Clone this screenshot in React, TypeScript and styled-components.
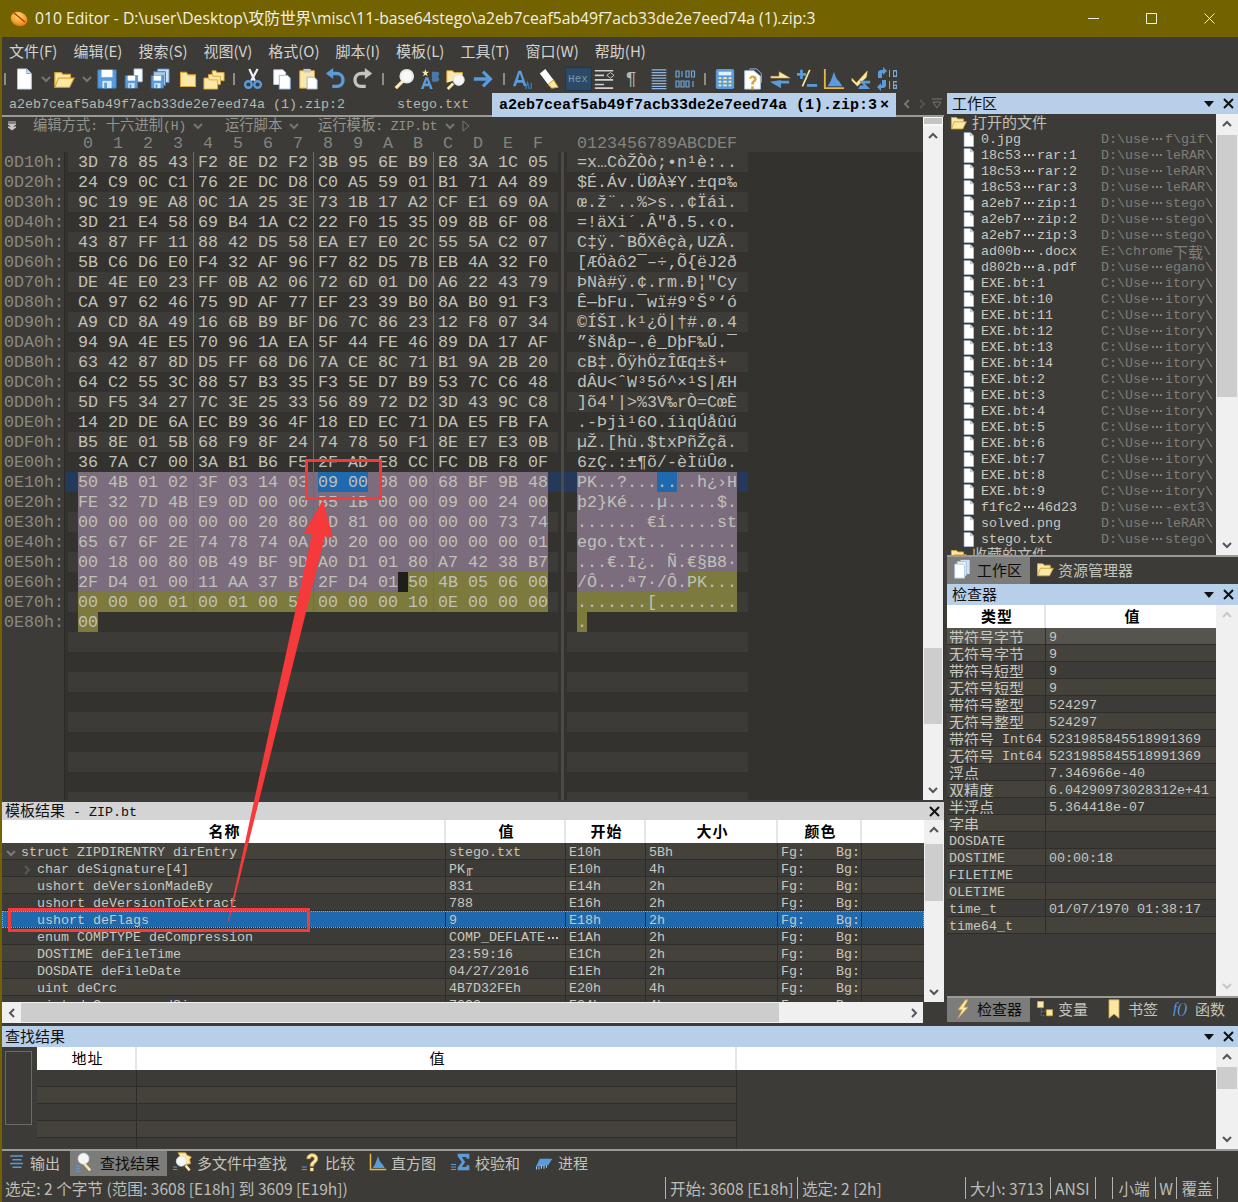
import React from 'react';
import styled, { createGlobalStyle } from 'styled-components';

const MONO = '"Liberation Mono", "DejaVu Sans Mono", monospace';
const CJK = '"Noto Sans CJK SC", "Noto Sans", sans-serif';
const BG = '#3c3b37';
const DARK = '#33322e';
const BLUEBAR = '#b8cfe9';
const OLIVE = '#736200';
const LINE = '#2e2d29';
const SCROLL = '#f0f0f0';
const THUMB = '#cdcdcd';

const Global = createGlobalStyle`
  html, body { margin: 0; padding: 0; background: ${BG}; overflow: hidden; }
  * { box-sizing: border-box; }
`;

const Cjk = styled.span`
  font-family: ${CJK}; font-size: 15px; line-height: 1;
`;
const Window = styled.div`
  position: relative; width: 1238px; height: 1202px; background: ${BG};
  border-left: 2px solid ${OLIVE}; display: flex; flex-direction: column; overflow: hidden;
  font-family: ${MONO}; font-size: 13.34px; color: #c8c8c0;
`;
const TitleBar = styled.div`
  height: 37px; margin-left: -2px; background: ${OLIVE}; display: flex; align-items: center; padding-left: 10px; flex: none;
`;
const TitleText = styled.span`
  font-family: "Open Sans", ${CJK}; font-size: 15.7px; color: #f2f0e4; margin: -3px 0 0 7px; white-space: nowrap; flex: 1;
`;
const WinBtn = styled.div`
  width: 58px; height: 37px; display: flex; align-items: center; justify-content: center; flex: none;
`;
const MenuBar = styled.div`
  height: 28px; display: flex; align-items: center; gap: 16px; padding: 0 0 2px 7px; flex: none;
  font-family: ${CJK}; font-size: 15px; color: #d2d2d0;
`;
const ToolBar = styled.div`
  height: 28px; display: flex; align-items: center; flex: none;
`;
const ToolItem = styled.div<{ $ml: number }>`
  width: 16px; margin-left: ${p => p.$ml}px; height: 28px; flex: none; display: flex; align-items: center; justify-content: center;
  & > * { flex: none; }
`;
const ToolSep = styled.div`
  width: 2px; height: 12px; background: #8d8d88;
`;
const HexBox = styled.div`
  width: 27px; height: 24px; background: #2b4a68; border: 1px solid #20384f; color: #7f95a8; font-size: 11px;
  display: flex; align-items: center; justify-content: center;
`;
const Pilcrow = styled.span`
  font-family: "Liberation Sans", sans-serif; font-size: 19px; color: #b8b8b4;
`;
const Workspace = styled.div`
  height: 933px; display: flex; flex: none;
`;
const EditorCol = styled.div`
  width: 942px; display: flex; flex-direction: column; flex: none;
`;
const SideCol = styled.div`
  width: 291px; margin-left: 3px; display: flex; flex-direction: column; flex: none;
`;
const DocTabs = styled.div`
  height: 24px; border-bottom: 2px solid #9a9a96; display: flex; flex: none; position: relative;
`;
const DocTab = styled.div<{ $w: number; $on?: boolean }>`
  width: ${p => p.$w}px; height: ${p => (p.$on ? 24 : 22)}px; flex: none; display: flex; align-items: center; justify-content: space-between;
  padding: 0 7px; font-weight: ${p => (p.$on ? 700 : 400)}; font-size: ${p => (p.$on ? 15 : 13.34)}px; white-space: pre;
  background: ${p => (p.$on ? BLUEBAR : 'transparent')}; color: ${p => (p.$on ? '#000' : '#b8b8b0')};
`;
const TabNav = styled.div`
  flex: 1; height: 22px; display: flex; align-items: center; justify-content: space-around; padding: 0 0 0 4px;
`;
const HexPane = styled.div`
  height: 683px; display: flex; flex: none; background: ${DARK};
`;
const HexMain = styled.div`
  width: 921px; flex: none; display: flex; flex-direction: column; overflow: hidden;
`;
const HexToolbar = styled.div`
  height: 17px; flex: none; background: ${BG}; color: #94948e; display: flex; align-items: center; white-space: pre; font-size: 13px; line-height: 15px;
  ${Cjk} { font-size: 14.3px; }
`;
const HexOption = styled.span<{ $w: number; $pl?: number }>`
  width: ${p => p.$w}px; flex: none; display: flex; align-items: center; gap: 6px; white-space: pre; padding-left: ${p => p.$pl ?? 0}px;
`;
const Ruler = styled.div`
  height: 18px; flex: none; background: ${BG}; display: flex; padding-left: 71px; color: #84847e; font-size: 16.67px; align-items: center; white-space: pre;
`;
const RulerCell = styled.span`
  width: 30px; flex: none; text-align: center;
`;
const RulerAscii = styled.span`
  margin-left: 24px;
`;
const HexRows = styled.div`
  flex: 1; overflow: hidden; font-size: 16.67px;
`;
const HexRowBox = styled.div`
  height: 20px; display: flex; align-items: stretch; white-space: pre; line-height: 22px;
`;
const Addr = styled.div`
  width: 62px; flex: none; background: ${BG}; padding-left: 2px; color: #8a8a84;
`;
const Gutter = styled.div<{ $hl: boolean }>`
  width: 4px; flex: none; border-left: 1px solid #2c2b28; background: ${p => (p.$hl ? '#253a5a' : DARK)};
`;
const HexArea = styled.div<{ $even: boolean; $hl: boolean }>`
  width: 490px; flex: none; padding-left: 10px; display: flex;
  background: ${p => (p.$hl ? '#253a5a' : p.$even ? BG : DARK)};
`;
const Cell = styled.span<{ $t: string; $g: string; $s: boolean }>`
  width: 30px; flex: none; height: 20px; color: #c0c0b9;
  background: linear-gradient(to right, ${p => p.$t} 0 20px, ${p => p.$g} 20px 25px, ${p => (p.$s ? '#6d6c68' : p.$g)} 25px 26px, ${p => p.$g} 26px 30px);
`;
const ColGap = styled.div<{ $hl: boolean }>`
  width: 3px; flex: none; background: ${p => (p.$hl ? '#253a5a' : DARK)};
`;
const ColSep = styled.div`
  width: 3px; flex: none; background: #4b4a46;
`;
const AsciiArea = styled(HexArea)`
  width: 181px;
`;
const AsciiChar = styled.span<{ $t: string }>`
  width: 10px; flex: none; height: 20px; background: ${p => p.$t}; color: #c0c0b9; text-align: center; overflow: hidden;
`;
const VScroll = styled.div<{ $w: number }>`
  width: ${p => p.$w}px; flex: none; background: ${SCROLL}; display: flex; flex-direction: column;
`;
const ScrollArrow = styled.div<{ $h?: number }>`
  height: ${p => p.$h ?? 20}px; flex: none; display: flex; align-items: center; justify-content: center;
`;
const ScrollTrack = styled.div`
  flex: 1; padding: 0 1px; min-height: 0;
`;
const ScrollThumb = styled.div<{ $top: number; $h: number }>`
  margin-top: ${p => p.$top}px; height: ${p => p.$h}px; background: ${THUMB};
`;
const GripTop = styled.div`
  height: 9px; flex: none; background: #f8f8f8; padding: 1px 1px 2px;
  &::before { content: ''; display: block; height: 100%; background: #c4c4c4; }
`;
const PanelTitle = styled.div<{ $grey?: boolean; $pl?: number }>`
  height: ${p => (p.$grey ? 18 : 21)}px; flex: none; display: flex; align-items: center; justify-content: space-between; padding: 0 4px 0 ${p => p.$pl ?? 5}px;
  color: #111; background: ${p => (p.$grey ? '#d4d4d4' : BLUEBAR)};
`;
const TitleBtns = styled.div`
  display: flex; align-items: center; gap: 9px;
`;
const PanelGap = styled.div`
  height: 2px; flex: none;
`;
const TemplatePanel = styled.div`
  flex: 1; display: flex; flex-direction: column; min-height: 0;
`;
const TableWrap = styled.div`
  height: 182px; display: flex; flex: none;
`;
const TableMain = styled.div`
  flex: 1; min-width: 0; display: flex; flex-direction: column; overflow: hidden;
`;
const HeadRow = styled.div<{ $h: number }>`
  height: ${p => p.$h}px; flex: none; display: flex; background: #fff;
`;
const HeadCell = styled.div<{ $w: number; $bold?: boolean; $flex?: boolean }>`
  width: ${p => p.$w}px; flex: ${p => (p.$flex ? 1 : 'none')}; display: flex; align-items: center; justify-content: center;
  padding: 0 0 2px 3px;
  border-right: ${p => (p.$flex ? 'none' : '2px solid #e6e6e6')}; color: #000;
  font-family: ${CJK}; font-size: 15px; letter-spacing: 1px; font-weight: ${p => (p.$bold ? 700 : 400)};
`;
const BodyRow = styled.div<{ $tone: string }>`
  height: 17px; flex: none; display: flex; background: ${p => p.$tone}; border-bottom: 1px solid ${LINE}; white-space: pre;
  line-height: 16px;
`;
const BodyCell = styled.div<{ $w: number; $pl?: number; $flex?: boolean; $end?: boolean }>`
  width: ${p => p.$w}px; flex: ${p => (p.$flex ? 1 : 'none')}; padding: 4px 0 0 ${p => p.$pl ?? 3}px; overflow: hidden;
  border-right: ${p => (p.$end ? 'none' : `1px solid ${LINE}`)}; color: #c8c8c0; display: flex; align-items: center;
  ${Cjk} { margin-top: -3px; }
`;
const FocusLine = styled(BodyRow)`
  outline: 1px dotted #c99a5a; outline-offset: -1px;
`;
const Twisty = styled.span`
  flex: none; width: 16px; display: inline-flex; align-items: center; justify-content: flex-start;
`;
const FgBg = styled.span`
  width: 55px; flex: none;
`;
const HScroll = styled.div`
  width: 921px; height: 21px; flex: none; display: flex; background: ${SCROLL}; align-items: center;
`;
const HScrollEnd = styled.div`
  width: 19px; height: 20px; flex: none; display: flex; align-items: center; justify-content: center;
`;
const HThumb = styled.div`
  width: 758px; height: 19px; background: ${THUMB}; flex: none;
`;
const HFill = styled.div`
  flex: 1;
`;
const FileList = styled.div`
  height: 441px; flex: none; display: flex;
`;
const FileMain = styled.div`
  flex: 1; overflow: hidden; min-width: 0;
`;
const FileGroup = styled.div<{ $h: number }>`
  height: ${p => p.$h}px; display: flex; align-items: center; padding-left: 3px; gap: 5px; color: #c0c0b8;
`;
const FileRow = styled.div`
  height: 16px; display: flex; align-items: center; padding-left: 14px; white-space: pre; color: #c8c8c0;
`;
const FileIcon = styled.span`
  width: 20px; flex: none; display: flex; align-items: center;
`;
const FileName = styled.span`
  width: 120px; flex: none; display: flex; align-items: center;
`;
const FilePath = styled.span`
  color: #7e7e78; display: flex; align-items: center;
`;
const Ell = styled.span`
  width: 16px; flex: none; display: inline-flex; justify-content: center; gap: 2px; align-items: center;
  &::before, &::after { content: ''; width: 2px; height: 2px; background: currentColor; }
  & > i { width: 2px; height: 2px; background: currentColor; display: block; }
`;
const TabBar = styled.div<{ $h: number; $line?: boolean }>`
  height: ${p => p.$h}px; flex: none; display: flex; align-items: stretch;
  border-top: ${p => (p.$line ? '2px solid #9a9a96' : 'none')};
`;
const TabItem = styled.div<{ $w: number; $on?: boolean }>`
  width: ${p => p.$w}px; flex: none; display: flex; align-items: center; gap: 4px; padding: 0 0 3px 6px;
  background: ${p => (p.$on ? '#7c7c7a' : 'transparent')}; color: ${p => (p.$on ? '#0c0c0c' : '#c4c4be')};
  & > svg { flex: none; }
`;
const InspectorWrap = styled.div`
  height: 391px; flex: none; display: flex;
`;
const FindPanel = styled.div`
  height: 123px; flex: none; display: flex; flex-direction: column;
`;
const FindBody = styled.div`
  flex: 1; display: flex; min-height: 0;
`;
const FindGutter = styled.div`
  width: 35px; flex: none; padding: 4px 3px 0 3px;
`;
const FindBox = styled.div`
  width: 27px; height: 74px; border: 1px solid #6b6b67;
`;
const FindRow = styled.div`
  height: 17px; flex: none; display: flex;
`;
const FindCell = styled.div<{ $w: number; $alt: boolean }>`
  width: ${p => p.$w}px; flex: none; background: ${p => (p.$alt ? '#45423c' : BG)};
  border-right: 1px solid ${LINE}; border-bottom: 1px solid ${LINE};
`;
const StatusBar = styled.div`
  height: 26px; flex: none; display: flex; align-items: center; padding-bottom: 2px; font-family: ${CJK}; font-size: 15.6px; color: #bdbdb8; white-space: pre;
`;
const StatusMain = styled.div`
  width: 663px; flex: none; padding-left: 3px;
`;
const StatusCell = styled.div<{ $w: number; $c?: boolean }>`
  width: ${p => p.$w}px; height: 22px; flex: none; border-left: 1px solid #b5b5b0; padding-left: ${p => (p.$c ? 0 : 4)}px;
  display: flex; align-items: center; justify-content: ${p => (p.$c ? 'center' : 'flex-start')};
`;
const FnGlyph = styled.span`
  font-family: "Liberation Serif", serif; font-style: italic; font-size: 15px; color: #5a9bdc; width: 18px; white-space: pre; flex: none;
`;
const Annotation = styled.svg`
  position: absolute; left: -2px; top: 0; pointer-events: none;
`;

/* ---------- icons ---------- */
const I: React.FC<{ s?: number; children: React.ReactNode }> = ({ s = 22, children }) => (
  <svg width={s} height={s} viewBox="0 0 24 24">{children}</svg>
);
const W = '#ffffff';
const B = '#5a9bdc';
const Bd = '#3a78bc';
const Y = '#fbe8a6';
const Yd = '#d9a63e';

const Chev: React.FC<{ d: 'u' | 'd' | 'l' | 'r'; c?: string; s?: number }> = ({ d, c = '#555', s = 12 }) => {
  const p = { u: 'M2 8l4-4 4 4', d: 'M2 4l4 4 4-4', l: 'M8 2L4 6l4 4', r: 'M4 2l4 4-4 4' }[d];
  return <svg width={s} height={s} viewBox="0 0 12 12"><path d={p} fill="none" stroke={c} strokeWidth="2" /></svg>;
};
const Doc = ({ s = 22 }: { s?: number }) => (
  <I s={s}><path d="M5 1h10l5 5v17H5z" fill={W} stroke="#b9cfe8" /><path d="M15 1v5h5" fill="#cfe0f2" stroke="#7da6d4" /></I>
);
const FolderOpen = ({ s = 22 }: { s?: number }) => (
  <I s={s}><path d="M2 20V5h7l2 2h8v4" fill={Y} stroke={Yd} strokeWidth="1.3" /><path d="M2 21l4-10h17l-5 10z" fill={Y} stroke={Yd} strokeWidth="1.3" /></I>
);
const Floppy = ({ x = 0, y = 0, k = 1 }) => (
  <g transform={`translate(${x} ${y}) scale(${k})`}>
    <path d="M2 2h20v20H2z" fill={B} stroke={Bd} />
    <path d="M6 2h12v8H6z" fill={W} /><path d="M7 14h10v8H7z" fill="#d8e8f8" />
    <path d="M9 16h3v6H9z" fill={B} />
  </g>
);
const Save = () => <I><Floppy /></I>;
const SaveAs = () => <I><path d="M12 1h9v14h-9z" fill={W} stroke="#9fbfe0" /><Floppy x={1} y={7} k={0.68} /></I>;
const SaveAll = () => <I><path d="M9 1h13v15H9z" fill="#cfe0f2" stroke={Bd} /><path d="M5 4h13v15H5z" fill="#a8c8ea" stroke={Bd} /><Floppy x={1} y={7} k={0.68} /></I>;
const Folder = () => <I s={20}><path d="M3 21V4h7l2 3h9v14z" fill={Y} stroke={Yd} strokeWidth="1.3" /></I>;
const Folders = () => <I><path d="M10 13V3h4l1 2h8v9z" fill={Y} stroke={Yd} /><path d="M6 17V7h4l1 2h8v9z" fill={Y} stroke={Yd} /><path d="M1 23V11h5l1 2h9v10z" fill={Y} stroke={Yd} /></I>;
const Cut = () => <I><path d="M8 1l6 13M17 1l-7 13" stroke="#eef2f8" strokeWidth="2.4" fill="none" /><circle cx="7" cy="18" r="3.6" fill="none" stroke={B} strokeWidth="2.6" /><circle cx="17" cy="18" r="3.6" fill="none" stroke={B} strokeWidth="2.6" /></I>;
const Copy = () => <I><path d="M3 2h10l3 3v13H3z" fill={W} stroke="#b9cfe8" /><path d="M9 8h9l3 3v12H9z" fill={W} stroke="#8fb2d8" /></I>;
const Paste = () => <I><path d="M3 3h16v19H3z" fill={Y} stroke={Yd} /><path d="M7 1h8v4H7z" fill="#c8c8c8" /><path d="M11 10h8l3 3v10H11z" fill={W} stroke="#8fb2d8" /></I>;
const Undo = ({ c = B, flip = false }: { c?: string; flip?: boolean }) => (
  <I><g transform={flip ? 'translate(24 0) scale(-1 1)' : undefined}><path d="M6 6h8c9 0 9 14 0 14H9" fill="none" stroke={c} strokeWidth="3.6" /><path d="M10 0v12L2 6z" fill={c} /></g></I>
);
const Find = () => <I><path d="M3 22l8-8" stroke={Y} strokeWidth="3.6" /><circle cx="15" cy="9" r="7" fill="#f8f8f8" stroke="#e6e6e6" strokeWidth="2" /></I>;
const Replace = () => (
  <I><path d="M2 23L7 10h3l5 13h-3l-1-3H6l-1 3zm5-6h3L8.500 13z" fill={B} /><path d="M14 4h5c4 0 4 4 1 5 3 1 3 6-1 6h-5z" fill="#4f8fd0" opacity=".75" /><path d="M7 1l1 3h3L8.500 6l1 3L7 7.300 4.500 9l1-3L3 4h3z" fill={Y} /></I>
);
const FindFiles = () => <I><path d="M2 16V3h6l2 2h9v6" fill={Y} stroke={Yd} /><path d="M3 23l6-6" stroke={Y} strokeWidth="3" /><circle cx="15" cy="13" r="6" fill="#f4f4f4" stroke="#dcdcdc" /></I>;
const GoTo = () => <I><path d="M2 12h18M12 4l8 8-8 8" fill="none" stroke={B} strokeWidth="3.600" /></I>;
const Font = () => <I><path d="M1 20L7 3h3l6 17h-3l-1.500-4H5.500L4 20zm5.500-7h4.500L8.500 6z" fill={B} /><path d="M15 23l2-7 2 7M21 16v7" stroke={Bd} strokeWidth="1.500" fill="none" /></I>;
const Eraser = () => <I><path d="M2 6l6-5 9 12-6 5z" fill={W} /><path d="M11 18l6-5 5 8-7 1z" fill={Y} stroke={Yd} /></I>;
const ListIco = () => <I><path d="M2 3h20M2 8h10M2 13h20M2 18h10M2 22h20" stroke="#d0d0d0" strokeWidth="1.800" /><path d="M15 8l4-3 4 3-4 3z" fill="none" stroke="#d0d0d0" /></I>;
const Lines = () => <I><path d="M4 2h16M4 5h16M4 8h16M4 11h16M4 14h16M4 17h16M4 20h16M4 22.500h16" stroke="#8fb6e0" strokeWidth="1.300" /></I>;
const Calc = () => <I><path d="M4 1h16q2 0 2 2v18q0 2-2 2H4q-2 0-2-2V3q0-2 2-2z" fill={B} /><path d="M5 4h14v4H5z" fill="#dff0ff" /><path d="M5 10h3v2H5zM10 10h4v2h-4zM16 10h3v2h-3zM5 14h3v2H5zM10 14h4v2h-4zM16 14h3v2h-3zM5 18h3v2H5zM10 18h4v2h-4zM16 18h3v2h-3z" fill={Y} /></I>;
const HelpDoc = () => <I><path d="M3 3h10l7 6v14H3z" fill={W} stroke="#b9cfe8" /><path d="M8 1h8l5 5v10" fill="none" stroke="#9fbfe0" /><path d="M8 12c0-5 8-5 8 0 0 3-3 3-3 6h-3c0-4 3-4 3-6 0-2-3-2-3 0z" fill={Yd} /><path d="M10 20h3v3h-3z" fill={Yd} /></I>;
const Swap = () => <I><path d="M2 9h9V4l12 7H2z" fill={Y} stroke={Yd} strokeWidth=".6" /><path d="M22 14h-9v-1L1 15l12 7v-5h9z" fill={B} /></I>;
const PlusMinus = () => <I><path d="M1 7h10M6 2v10" stroke={B} strokeWidth="3" /><path d="M15 2L7 20" stroke={Y} strokeWidth="1.800" /><path d="M12 19h11" stroke={B} strokeWidth="3" /></I>;
const Hist = ({ s = 22 }: { s?: number }) => <I s={s}><path d="M2 1v21h21" fill="none" stroke="#e3b64a" strokeWidth="2" /><path d="M5 20l3-5 2-5 2-6 2 6 2 3 2 2 3 5z" fill={B} /></I>;
const Check = () => <I><path d="M2 11l5 5 12-13-1 7-10 10-6-6z" fill={Y} stroke={Yd} strokeWidth=".5" /><path d="M10 14h12v3h-6l6 6H9l2-4h4z" fill={B} /></I>;
const Convert = () => (
  <svg width="26" height="24" viewBox="0 0 26 24">
    <path d="M3 11V6q0-3 3-3h2V0l4 4-4 4V6H7v5z" fill={B} /><path d="M11 13v5q0 3-3 3H6v3l-4-4 4-4v2h1v-5z" fill={B} />
    <path d="M14 3h1v7h-1zM18 3h4v7h-4zM19 4.500v4h2v-4zM14 14h1v8h-1zM18 14h4v1.500h-3v2h3v4.500h-4zM19 19v1.500h2V19z" fill="#7aa8d8" />
  </svg>
);
const Bits = () => (
  <svg width="22" height="22" viewBox="0 0 22 22">
    <g fill="none" stroke="#6fa8e0" strokeWidth="1.200">
      <path d="M2 3h3v6H2zM8 3v6M12 3h3v6h-3zM17.500 3h3v6h-3zM2 13h3v6H2zM7 13h3v6H7zM12 13h3v6h-3zM19 13v6" />
    </g>
  </svg>
);
const OutputIco = () => <I s={18}><path d="M3 4h17M6 9h12M3 14h17M6 19h12" stroke={B} strokeWidth="1.800" /></I>;
const SearchIco = () => <I s={20}><path d="M8 12l9 10" stroke={Y} strokeWidth="3" /><circle cx="9" cy="8" r="6.500" fill="#f6f6f6" stroke="#ddd" /><path d="M0 17h5M0 20h5M0 23h5" stroke={B} strokeWidth="1.300" /></I>;
const MultiFindIco = () => <I s={20}><path d="M6 1h9l2 3 5 2-2 3 1 5-6 1z" fill={Y} stroke={Yd} /><circle cx="10" cy="11" r="6" fill="#f6f6f6" stroke="#ddd" /><path d="M15 16l5 6" stroke={Y} strokeWidth="3" /><path d="M0 18h5M0 21h5" stroke={B} strokeWidth="1.300" /></I>;
const QuestionIco = () => <I s={20}><path d="M7 8c0-8 13-8 13 0 0 5-5 5-5 9h-4c0-6 5-6 5-9 0-3-5-3-5 0z" fill={Y} stroke={Yd} /><path d="M11 19h4v4h-4z" fill={Y} /><path d="M1 18h6M1 21h6" stroke={B} strokeWidth="1.300" /></I>;
const SumIco = () => <I s={20}><path d="M8 2h14v6h-3l-1-2h-5l4 6-4 6h5l1-2h3v6H8v-3l5-7-5-7z" fill={B} /><path d="M0 15h6M0 18h6M0 21h6" stroke={B} strokeWidth="1.300" /></I>;
const ProcIco = () => <I s={20}><path d="M2 18l5-10h15l-5 8z" fill={B} /><path d="M3 21v-3M6 21v-3M9 20v-4M12 20v-4M15 19v-3" stroke="#9fc4ea" strokeWidth="1.300" /></I>;
const DocsIco = () => <I s={20}><path d="M9 1h11v17H9z" fill="#cfe0f2" /><path d="M5 3h11v17H5z" fill="#e8f0f8" stroke="#9fbfe0" /><path d="M2 6h10l2 2v15H2z" fill={W} stroke="#9fbfe0" /></I>;
const BoltIco = () => <I s={20}><path d="M15 1L6 13h5l-5 10 12-13h-5l5-9z" fill={Y} stroke={Yd} /></I>;
const VarIco = () => <I s={18}><path d="M2 2h8v8H2zM14 13h8v8h-8z" fill={Y} stroke="#d9a63e" /><path d="M7 11v10h6M7 15h6" stroke={B} strokeDasharray="2 2" fill="none" /></I>;
const MarkIco = () => <I s={20}><path d="M6 1h12v22l-6-5-6 5z" fill={Y} stroke={Yd} /></I>;
const Logo = () => (
  <svg width="18" height="18" viewBox="0 0 18 18">
    <defs><radialGradient id="lg" cx=".4" cy=".35" r=".8"><stop offset="0" stopColor="#ffe07a" /><stop offset=".6" stopColor="#f39a1e" /><stop offset="1" stopColor="#c9581a" /></radialGradient></defs>
    <ellipse cx="9" cy="9" rx="8.500" ry="7" fill="url(#lg)" transform="rotate(25 9 9)" />
    <path d="M4 3l11 9" stroke="#b83a1a" strokeWidth="1.600" />
  </svg>
);
const Tri = () => <svg width="10" height="6" viewBox="0 0 10 6"><path d="M0 0h10L5 6z" fill="#111" /></svg>;
const CloseX = () => <svg width="11" height="11" viewBox="0 0 11 11"><path d="M1 1l9 9M10 1l-9 9" stroke="#111" strokeWidth="2" /></svg>;

/* ---------- text helper ---------- */
const mix = (t: string): React.ReactNode[] =>
  t.split(/([\u2E80-\u9FFF]+|⋯)/).filter(Boolean).map((part, i) =>
    part === '⋯' ? <Ell key={i}><i /></Ell> : /[\u2E80-\u9FFF]/.test(part) ? <Cjk key={i}>{part}</Cjk> : <span key={i}>{part}</span>
  );

/* ---------- data ---------- */
const HEX = [
  '3D 78 85 43 F2 8E D2 F2 3B 95 6E B9 E8 3A 1C 05', '24 C9 0C C1 76 2E DC D8 C0 A5 59 01 B1 71 A4 89',
  '9C 19 9E A8 0C 1A 25 3E 73 1B 17 A2 CF E1 69 0A', '3D 21 E4 58 69 B4 1A C2 22 F0 15 35 09 8B 6F 08',
  '43 87 FF 11 88 42 D5 58 EA E7 E0 2C 55 5A C2 07', '5B C6 D6 E0 F4 32 AF 96 F7 82 D5 7B EB 4A 32 F0',
  'DE 4E E0 23 FF 0B A2 06 72 6D 01 D0 A6 22 43 79', 'CA 97 62 46 75 9D AF 77 EF 23 39 B0 8A B0 91 F3',
  'A9 CD 8A 49 16 6B B9 BF D6 7C 86 23 12 F8 07 34', '94 9A 4E E5 70 96 1A EA 5F 44 FE 46 89 DA 17 AF',
  '63 42 87 8D D5 FF 68 D6 7A CE 8C 71 B1 9A 2B 20', '64 C2 55 3C 88 57 B3 35 F3 5E D7 B9 53 7C C6 48',
  '5D F5 34 27 7C 3E 25 33 56 89 72 D2 3D 43 9C C8', '14 2D DE 6A EC B9 36 4F 18 ED EC 71 DA E5 FB FA',
  'B5 8E 01 5B 68 F9 8F 24 74 78 50 F1 8E E7 E3 0B', '36 7A C7 00 3A B1 B6 F5 2F AD E8 CC FC DB F8 0F',
  '50 4B 01 02 3F 03 14 03 09 00 08 00 68 BF 9B 48', 'FE 32 7D 4B E9 0D 00 00 B5 1B 00 00 09 00 24 00',
  '00 00 00 00 00 00 20 80 ED 81 00 00 00 00 73 74', '65 67 6F 2E 74 78 74 0A 00 20 00 00 00 00 00 01',
  '00 18 00 80 0B 49 BF 9D A0 D1 01 80 A7 42 38 B7', '2F D4 01 00 11 AA 37 B7 2F D4 01 50 4B 05 06 00',
  '00 00 00 01 00 01 00 5B 00 00 00 10 0E 00 00 00', '00',
];
const PURPLE = '#7b6d7d';
const YELLOW = '#7c7a3c';
const BLUE = '#1f69ae';
const NONE = 'transparent';
const tone = (r: number, c: number): string => {
  if (r === 16 && (c === 8 || c === 9)) return BLUE;
  if (r >= 16 && r <= 20) return PURPLE;
  if (r === 21) return c <= 10 ? PURPLE : YELLOW;
  if (r === 22) return YELLOW;
  if (r === 23 && c === 0) return YELLOW;
  return NONE;
};
const gapTone = (r: number, c: number): string => {
  if (c === 15) return NONE;
  if (r === 21 && c === 10) return '#1f1e1b';
  if (r === 16 && c === 9) return PURPLE;
  const t = tone(r, c);
  return tone(r, c + 1) === NONE ? NONE : t;
};
const decoder = new TextDecoder('windows-1252');
const toChar = (b: number): string => {
  if (b < 0x20 || b === 0x7f || b === 0x81 || b === 0x8d || b === 0x8f || b === 0x90 || b === 0x9d) return '.';
  if (b === 0xa0) return ' ';
  if (b === 0xad) return '-';
  return decoder.decode(new Uint8Array([b]));
};
const TOTAL_ROWS = 33;

const HexRow: React.FC<{ r: number }> = ({ r }) => {
  const bytes = HEX[r] ? HEX[r].split(' ') : [];
  const hl = r === 16;
  const even = r % 2 === 0;
  const addr = r < HEX.length ? `0${(0xd1 + r).toString(16).toUpperCase()}0h:` : '';
  return (
    <HexRowBox>
      <Addr>{addr}</Addr>
      <Gutter $hl={hl} />
      <HexArea $even={even} $hl={hl}>
        {bytes.map((b, c) => (
          <Cell key={c} $t={tone(r, c)} $g={gapTone(r, c)} $s={r <= 22 && (c === 3 || c === 7 || c === 11)}>{b}</Cell>
        ))}
      </HexArea>
      <ColGap $hl={hl} />
      <ColSep />
      <ColGap $hl={hl} />
      <AsciiArea $even={even} $hl={hl}>
        {bytes.map((b, c) => <AsciiChar key={c} $t={tone(r, c)}>{toChar(parseInt(b, 16))}</AsciiChar>)}
      </AsciiArea>
    </HexRowBox>
  );
};

const FILES: [string, string][] = [
  ['0.jpg', 'D:\\use⋯f\\gif\\'],
  ['18c53⋯rar:1', 'D:\\use⋯leRAR\\'], ['18c53⋯rar:2', 'D:\\use⋯leRAR\\'], ['18c53⋯rar:3', 'D:\\use⋯leRAR\\'],
  ['a2eb7⋯zip:1', 'D:\\use⋯stego\\'], ['a2eb7⋯zip:2', 'D:\\use⋯stego\\'], ['a2eb7⋯zip:3', 'D:\\use⋯stego\\'],
  ['ad00b⋯.docx', 'E:\\chrome下载\\'], ['d802b⋯a.pdf', 'D:\\use⋯egano\\'],
  ...['1', '10', '11', '12', '13', '14', '2', '3', '4', '5', '6', '7', '8', '9'].map((n): [string, string] => [`EXE.bt:${n}`, 'C:\\Use⋯itory\\']),
  ['f1fc2⋯46d23', 'D:\\use⋯-ext3\\'], ['solved.png', 'D:\\use⋯leRAR\\'], ['stego.txt', 'D:\\use⋯stego\\'],
];
const INSPECT: [string, string][] = [
  ['带符号字节', '9'], ['无符号字节', '9'], ['带符号短型', '9'], ['无符号短型', '9'], ['带符号整型', '524297'], ['无符号整型', '524297'],
  ['带符号 Int64', '5231985845518991369'], ['无符号 Int64', '5231985845518991369'], ['浮点', '7.346966e-40'], ['双精度', '6.04290973028312e+41'],
  ['半浮点', '5.364418e-07'], ['字串', ''], ['DOSDATE', ''], ['DOSTIME', '00:00:18'], ['FILETIME', ''], ['OLETIME', ''], ['time_t', '01/07/1970 01:38:17'], ['time64_t', ''],
];
const TEMPLATE: [string, string, string, string][] = [
  ['struct ZIPDIRENTRY dirEntry', 'stego.txt', 'E10h', '5Bh'],
  ['char deSignature[4]', 'PK╓', 'E10h', '4h'],
  ['ushort deVersionMadeBy', '831', 'E14h', '2h'],
  ['ushort deVersionToExtract', '788', 'E16h', '2h'],
  ['ushort deFlags', '9', 'E18h', '2h'],
  ['enum COMPTYPE deCompression', 'COMP_DEFLATE⋯', 'E1Ah', '2h'],
  ['DOSTIME deFileTime', '23:59:16', 'E1Ch', '2h'],
  ['DOSDATE deFileDate', '04/27/2016', 'E1Eh', '2h'],
  ['uint deCrc', '4B7D32FEh', 'E20h', '4h'],
  ['uint deCompressedSize', '7093', 'E24h', '4h'],
];
const ZA = '#45423c';
const ZB = '#3c3b37';

const TemplateRow: React.FC<{ r: number }> = ({ r }) => {
  const [n, v, s, z] = TEMPLATE[r];
  const Row = r === 4 ? FocusLine : BodyRow;
  return (
    <Row $tone={r === 4 ? BLUE : r % 2 === 0 ? ZA : ZB}>
      <BodyCell $w={444} $pl={r === 0 ? 3 : r === 1 ? 19 : 35}>
        {r === 0 && <Twisty><Chev d="d" c="#7b7b76" /></Twisty>}
        {r === 1 && <Twisty><Chev d="r" c="#5a5a55" /></Twisty>}
        {n}
      </BodyCell>
      <BodyCell $w={120}>{mix(v)}</BodyCell>
      <BodyCell $w={80}>{s}</BodyCell>
      <BodyCell $w={132}>{z}</BodyCell>
      <BodyCell $w={84}><FgBg>Fg:</FgBg>Bg:</BodyCell>
      <BodyCell $w={0} $flex $end />
    </Row>
  );
};

const CH = <Chev d="d" c="#77776f" />;
const TOOLS: [React.ReactNode, number][] = [
  [<ToolSep />, 5], [<Doc />, 24], [CH, 46], [<FolderOpen />, 64], [CH, 87], [<Save />, 107], [<SaveAs />, 134],
  [<SaveAll />, 160], [<Folder />, 188], [<Folders />, 214], [<ToolSep />, 234], [<Cut />, 253], [<Copy />, 282], [<Paste />, 308], [<Undo />, 335], [<Undo c="#c4c4c0" flip />, 363],
  [<ToolSep />, 383], [<Find />, 404], [<Replace />, 430], [<FindFiles />, 456], [<GoTo />, 483], [<ToolSep />, 504], [<Font />, 523], [<Eraser />, 549],
  [<HexBox>Hex</HexBox>, 578], [<ListIco />, 604], [<Pilcrow>¶</Pilcrow>, 631], [<Lines />, 659], [<Bits />, 685], [<ToolSep />, 705],
  [<Calc />, 725], [<HelpDoc />, 753], [<Swap />, 780], [<PlusMinus />, 807], [<Hist />, 834], [<Check />, 861], [<Convert />, 888],
];
const MENU = ['文件(F)', '编辑(E)', '搜索(S)', '视图(V)', '格式(O)', '脚本(I)', '模板(L)', '工具(T)', '窗口(W)', '帮助(H)'];

const Scroll: React.FC<{ w?: number; top?: number; h?: number; faded?: boolean; grip?: boolean }> = ({ w = 20, top = 0, h = 0, faded, grip }) => (
  <VScroll $w={w}>
    {grip && <GripTop />}
    <ScrollArrow><Chev d="u" c={faded ? '#c8c8c8' : '#555'} /></ScrollArrow>
    <ScrollTrack>{h > 0 && <ScrollThumb $top={top} $h={h} />}</ScrollTrack>
    <ScrollArrow><Chev d="d" c={faded ? '#c8c8c8' : '#555'} /></ScrollArrow>
  </VScroll>
);

const Tab: React.FC<{ w: number; on?: boolean; icon: React.ReactNode; label: string }> = ({ w, on, icon, label }) => (
  <TabItem $w={w} $on={on}>{icon}<Cjk>{label}</Cjk></TabItem>
);

export default function App() {
  return (
    <Window>
      <Global />
      <TitleBar>
        <Logo />
        <TitleText>010 Editor - D:\user\Desktop\攻防世界\misc\11-base64stego\a2eb7ceaf5ab49f7acb33de2e7eed74a (1).zip:3</TitleText>
        <WinBtn><svg width="11" height="11" viewBox="0 0 11 11"><path d="M0 5.500h11" stroke="#f2f0e4" /></svg></WinBtn>
        <WinBtn><svg width="11" height="11" viewBox="0 0 11 11"><path d="M.5.5h10v10H.5z" fill="none" stroke="#f2f0e4" /></svg></WinBtn>
        <WinBtn><svg width="11" height="11" viewBox="0 0 11 11"><path d="M.5.5l10 10M10.500.5l-10 10" stroke="#f2f0e4" /></svg></WinBtn>
      </TitleBar>
      <MenuBar>{MENU.map(m => <span key={m}>{m}</span>)}</MenuBar>
      <ToolBar>
        {TOOLS.map(([n, c], i) => {
          const prevRight = i === 0 ? 2 : TOOLS[i - 1][1] + 8;
          return <ToolItem key={i} $ml={c - 8 - prevRight}>{n}</ToolItem>;
        })}
      </ToolBar>

      <Workspace>
        <EditorCol>
          <DocTabs>
            <DocTab $w={388}>a2eb7ceaf5ab49f7acb33de2e7eed74a (1).zip:2</DocTab>
            <DocTab $w={102}>stego.txt</DocTab>
            <DocTab $w={404} $on><span>a2eb7ceaf5ab49f7acb33de2e7eed74a (1).zip:3</span><span>×</span></DocTab>
            <TabNav>
              <Chev d="l" c="#77776f" /><Chev d="r" c="#55554f" />
              <svg width="12" height="12" viewBox="0 0 12 12"><path d="M1 1h10M2 4h8L6 10z" fill="none" stroke="#77776f" /></svg>
            </TabNav>
          </DocTabs>
          <HexPane>
            <HexMain>
              <HexToolbar>
                <HexOption $w={31} $pl={5}><svg width="10" height="10" viewBox="0 0 10 10"><path d="M1 1h8M1 3l4 3 4-3zM1 6l4 3 4-3z" fill="#c8c8c4" stroke="#c8c8c4" /></svg></HexOption>
                <HexOption $w={192}><span>{mix('编辑方式: 十六进制(H)')}</span>{CH}</HexOption>
                <HexOption $w={93}><span>{mix('运行脚本')}</span>{CH}</HexOption>
                <HexOption $w={170}><span>{mix('运行模板: ZIP.bt')}</span>{CH}<svg width="8" height="12" viewBox="0 0 8 12"><path d="M1 1l6 5-6 5z" fill="none" stroke="#77776f" /></svg></HexOption>
              </HexToolbar>
              <Ruler>
                {'0123456789ABCDEF'.split('').map(ch => <RulerCell key={ch}>{ch}</RulerCell>)}
                <RulerAscii>0123456789ABCDEF</RulerAscii>
              </Ruler>
              <HexRows>
                {Array.from({ length: TOTAL_ROWS }, (_, r) => <HexRow key={r} r={r} />)}
              </HexRows>
            </HexMain>
            <Scroll grip top={502} h={76} />
          </HexPane>
          <PanelGap />
          <TemplatePanel>
            <PanelTitle $grey $pl={3}>
              <span>{mix('模板结果 - ZIP.bt')}</span>
              <CloseX />
            </PanelTitle>
            <TableWrap>
              <TableMain>
                <HeadRow $h={23}>
                  <HeadCell $w={444} $bold>名称</HeadCell>
                  <HeadCell $w={120} $bold>值</HeadCell>
                  <HeadCell $w={80} $bold>开始</HeadCell>
                  <HeadCell $w={132} $bold>大小</HeadCell>
                  <HeadCell $w={84} $bold>颜色</HeadCell>
                  <HeadCell $w={0} $flex />
                </HeadRow>
                {TEMPLATE.map((_, r) => <TemplateRow key={r} r={r} />)}
              </TableMain>
              <Scroll top={4} h={57} />
            </TableWrap>
            <HScroll>
              <HScrollEnd><Chev d="l" /></HScrollEnd>
              <HThumb />
              <HFill />
              <HScrollEnd><Chev d="r" /></HScrollEnd>
            </HScroll>
          </TemplatePanel>
        </EditorCol>

        <SideCol>
          <PanelTitle>
            <span>{mix('工作区')}</span>
            <TitleBtns><Tri /><CloseX /></TitleBtns>
          </PanelTitle>
          <FileList>
            <FileMain>
              <FileGroup $h={17}><FolderOpen s={17} /><span>{mix('打开的文件')}</span></FileGroup>
              {FILES.map(([n, p]) => (
                <FileRow key={n}>
                  <FileIcon><Doc s={15} /></FileIcon>
                  <FileName>{mix(n)}</FileName>
                  <FilePath>{mix(p)}</FilePath>
                </FileRow>
              ))}
              <FileGroup $h={16}><FolderOpen s={17} /><span>{mix('收藏的文件')}</span></FileGroup>
            </FileMain>
            <Scroll w={22} top={1} h={262} />
          </FileList>
          <TabBar $h={29} $line>
            <Tab w={83} on icon={<DocsIco />} label="工作区" />
            <Tab w={110} icon={<FolderOpen s={18} />} label="资源管理器" />
          </TabBar>
          <PanelTitle>
            <span>{mix('检查器')}</span>
            <TitleBtns><Tri /><CloseX /></TitleBtns>
          </PanelTitle>
          <InspectorWrap>
            <TableMain>
              <HeadRow $h={23}>
                <HeadCell $w={99} $bold>类型</HeadCell>
                <HeadCell $w={170} $flex $bold>值</HeadCell>
              </HeadRow>
              {INSPECT.map(([k, v], i) => (
                <BodyRow key={k} $tone={i === 0 ? '#55544f' : i % 2 === 0 ? ZB : ZA}>
                  <BodyCell $w={99} $pl={2}>{mix(k)}</BodyCell>
                  <BodyCell $w={0} $flex $end>{v}</BodyCell>
                </BodyRow>
              ))}
            </TableMain>
            <Scroll w={22} faded />
          </InspectorWrap>
          <TabBar $h={26} $line>
            <Tab w={83} on icon={<BoltIco />} label="检查器" />
            <Tab w={68} icon={<VarIco />} label="变量" />
            <Tab w={69} icon={<MarkIco />} label="书签" />
            <Tab w={60} icon={<FnGlyph>f()</FnGlyph>} label="函数" />
          </TabBar>
        </SideCol>
      </Workspace>

      <FindPanel>
        <PanelTitle $pl={3}>
          <span>{mix('查找结果')}</span>
          <TitleBtns><Tri /><CloseX /></TitleBtns>
        </PanelTitle>
        <FindBody>
          <FindGutter><FindBox /></FindGutter>
          <TableMain>
            <HeadRow $h={23}>
              <HeadCell $w={100}>地址</HeadCell>
              <HeadCell $w={600}>值</HeadCell>
              <HeadCell $w={0} $flex />
            </HeadRow>
            {[0, 1, 2, 3, 4].map(i => (
              <FindRow key={i}>
                <FindCell $w={100} $alt={i % 2 === 1} />
                <FindCell $w={600} $alt={i % 2 === 1} />
              </FindRow>
            ))}
          </TableMain>
          <Scroll w={22} h={22} />
        </FindBody>
      </FindPanel>
      <TabBar $h={27} $line>
        <Tab w={68} icon={<OutputIco />} label="输出" />
        <Tab w={97} on icon={<SearchIco />} label="查找结果" />
        <Tab w={128} icon={<MultiFindIco />} label="多文件中查找" />
        <Tab w={68} icon={<QuestionIco />} label="比较" />
        <Tab w={82} icon={<Hist s={18} />} label="直方图" />
        <Tab w={83} icon={<SumIco />} label="校验和" />
        <Tab w={80} icon={<ProcIco />} label="进程" />
      </TabBar>
      <StatusBar>
        <StatusMain>选定: 2 个字节 (范围: 3608 [E18h] 到 3609 [E19h])</StatusMain>
        <StatusCell $w={132}>开始: 3608 [E18h]</StatusCell>
        <StatusCell $w={168}>选定: 2 [2h]</StatusCell>
        <StatusCell $w={85}>大小: 3713</StatusCell>
        <StatusCell $w={45}>ANSI</StatusCell>
        <StatusCell $w={17} />
        <StatusCell $w={43} $c>小端</StatusCell>
        <StatusCell $w={21} $c>W</StatusCell>
        <StatusCell $w={41} $c>覆盖</StatusCell>
        <StatusCell $w={19} />
      </StatusBar>

      <Annotation width="1238" height="1202" viewBox="0 0 1238 1202">
        <rect x="306.500" y="460.500" width="74" height="38" fill="none" stroke="#f6393b" strokeWidth="3" />
        <rect x="9.500" y="909.500" width="299" height="21" fill="none" stroke="#f6393b" strokeWidth="3" />
        <path d="M228 921L312 534L304 533L323 500L333 538L325 536L229 921Z" fill="#f6393b" />
      </Annotation>
    </Window>
  );
}
